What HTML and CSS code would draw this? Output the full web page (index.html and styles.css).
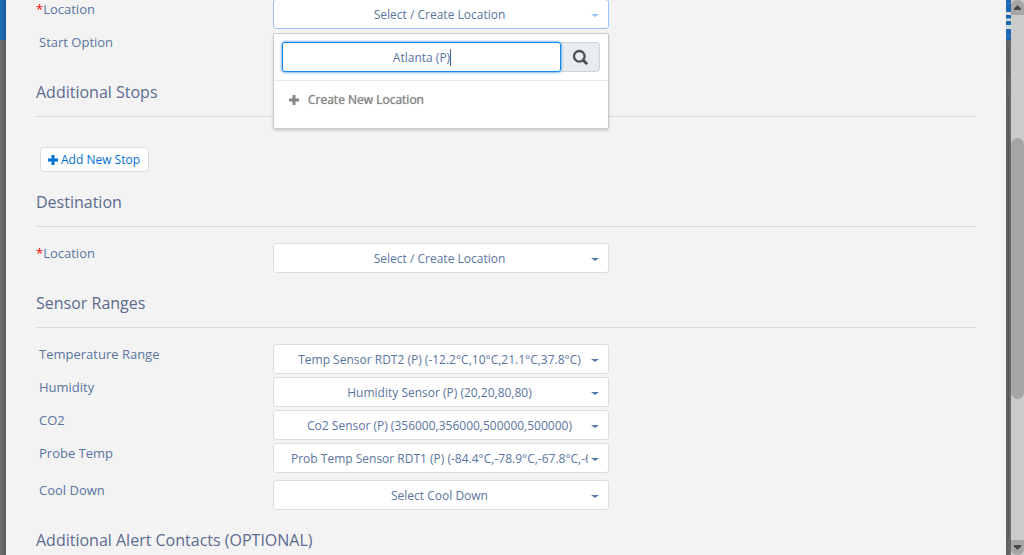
FILE: index.html
```html
<!DOCTYPE html>
<html lang="en">
<head>
<meta charset="utf-8">
<title>New Shipment</title>
<link rel="stylesheet" href="styles.css">
</head>
<body>
<div class="backdrop-left"></div>
<main class="panel">
  <section>
    <div class="row row-first">
      <label class="label" for="origin"><span class="required">*</span>Location</label>
      <div class="picker picker-open">
        <select class="select" id="origin"><option>Select / Create Location</option></select>
        <div class="menu">
          <div class="search">
            <div class="search-field">
              <input class="search-input" type="text" value="Atlanta (P)" aria-label="Search locations">
              <span class="cursor"></span>
            </div>
            <button class="search-button" type="button" aria-label="Search">
              <svg width="16" height="16" viewBox="0 0 16 16" fill="none" stroke="currentColor"><circle cx="7.300" cy="7.300" r="5.300" stroke-width="2.300"/><path d="M11.200 11.200L14.300 14.300" stroke-width="2.900" stroke-linecap="round"/></svg>
            </button>
          </div>
          <button class="create" type="button">
            <svg class="plus" width="10" height="10" viewBox="0 0 10 10"><path d="M3.5 0h3v3.500H10v3H6.500V10h-3V6.500H0v-3h3.500z" fill="currentColor"/></svg>
            Create New Location
          </button>
        </div>
      </div>
    </div>
    <div class="row"><span class="label label-plain">Start Option</span></div>
  </section>

  <section>
    <h2 class="heading">Additional Stops</h2>
    <button class="add" type="button"><svg class="plus" width="10" height="10" viewBox="0 0 10 10"><path d="M3.5 0h3v3.500H10v3H6.500V10h-3V6.500H0v-3h3.500z" fill="currentColor"/></svg>Add New Stop</button>
  </section>

  <section>
    <h2 class="heading">Destination</h2>
    <div class="row">
      <label class="label" for="destination"><span class="required">*</span>Location</label>
      <div class="picker"><select class="select" id="destination"><option>Select / Create Location</option></select></div>
    </div>
  </section>

  <section>
    <h2 class="heading">Sensor Ranges</h2>
    <div class="row">
      <label class="label label-plain" for="temperature">Temperature Range</label>
      <div class="picker"><select class="select" id="temperature"><option>Temp Sensor RDT2 (P) (-12.2°C,10°C,21.1°C,37.8°C)</option></select></div>
    </div>
    <div class="row">
      <label class="label label-plain" for="humidity">Humidity</label>
      <div class="picker"><select class="select" id="humidity"><option>Humidity Sensor (P) (20,20,80,80)</option></select></div>
    </div>
    <div class="row">
      <label class="label label-plain" for="co2">CO2</label>
      <div class="picker"><select class="select" id="co2"><option>Co2 Sensor (P) (356000,356000,500000,500000)</option></select></div>
    </div>
    <div class="row">
      <label class="label label-plain" for="probe">Probe Temp</label>
      <div class="picker"><select class="select" id="probe"><option>Prob Temp Sensor RDT1 (P) (-84.4°C,-78.9°C,-67.8°C,-62.2°C)</option></select></div>
    </div>
    <div class="row row-spaced">
      <label class="label label-plain" for="cooldown">Cool Down</label>
      <div class="picker"><select class="select" id="cooldown"><option>Select Cool Down</option></select></div>
    </div>
  </section>

  <section>
    <h2 class="heading">Additional Alert Contacts (OPTIONAL)</h2>
  </section>
</main>
<div class="backdrop-right">
  <div class="nav-edge"><svg width="5" height="40" viewBox="0 0 5 40"><path d="M0 12h5v3H0zM0 18.500h5v2.500H0zM0 25h5v4H0z" fill="#d2d8dc"/><path d="M0 3.500h5M0 36.500h5" stroke="#3a7cba"/></svg></div>
  <div class="card-edge card-edge-small"></div>
  <div class="card-edge card-edge-tall"></div>
</div>
<div class="scrollbar">
  <div class="arrow arrow-up"><svg width="7" height="5" viewBox="0 0 7 5"><path d="M3.500 0L7 3.500V5H0V3.500z" fill="#484848"/></svg></div>
  <div class="track"><div class="thumb"></div></div>
  <div class="arrow arrow-down"><svg width="7" height="5" viewBox="0 0 7 5"><path d="M3.500 5L7 1.500V0H0v1.500z" fill="#484848"/></svg></div>
</div>
</body>
</html>
```
FILE: styles.css
```css
* { box-sizing: border-box; }

body {
  margin: 0;
  height: 100vh;
  display: grid;
  grid-template-columns: 6px minmax(0, 1fr) 5px 13px;
  overflow: hidden;
  font-family: "Open Sans", "Noto Sans", sans-serif;
  font-size: 13px;
  color: #5a75a0;
  background: #6c6c6c;
}

button, input, select { font: inherit; color: inherit; }

.backdrop-left {
  background:
    linear-gradient(90deg, transparent, rgba(0, 0, 0, .2)),
    linear-gradient(#1d6fbb 40px, #707070 40px);
}

.panel {
  height: 100vh;
  overflow: hidden;
  padding: 0 30px;
  background: #f3f3f3;
}

.row {
  display: grid;
  grid-template-columns: 237px minmax(0, 336px);
  align-items: start;
  min-height: 33px;
}
.row-first { margin-top: -1px; }
.row-spaced { margin-top: 4px; }

.label { line-height: 20px; }
.label-plain { padding-left: 3px; }
.required { color: #f00; }

.heading {
  margin: 15px 0 16px;
  padding-bottom: 12px;
  border-bottom: 1px solid #d8dadc;
  font-size: 16px;
  font-weight: 400;
  line-height: 24px;
  color: #5c6b8f;
}

.picker { position: relative; }
.picker::after {
  content: "";
  position: absolute;
  top: 15px;
  right: 10px;
  border: 4px solid transparent;
  border-top: 3px solid #5578ac;
  border-bottom: 0;
  pointer-events: none;
}
.picker-open::after { border-top-color: #99c2ff; }

.select {
  display: block;
  width: 100%;
  height: 30px;
  padding: 0 20px 0 17px;
  appearance: none;
  border: 1px solid #d8dde6;
  border-radius: 3px;
  background: #fff;
  font-size: 12px;
  text-align-last: center;
}
.picker-open .select { border-color: #99c2ff; }

.menu {
  position: absolute;
  z-index: 1;
  top: 34px;
  left: 0;
  right: 0;
  padding-bottom: 13px;
  border: 1px solid #c9c9cb;
  border-radius: 2px;
  background: #fff;
  box-shadow: 0 2px 3px rgba(0, 0, 0, .14);
}
.search {
  display: flex;
  padding: 8px;
  border-bottom: 1px solid #e5e9ee;
}
.search-field { position: relative; flex: 1; }
.search-input {
  display: block;
  width: 100%;
  height: 30px;
  border: 1px solid #1589ee;
  border-radius: 3px;
  outline: 0;
  background: #fff;
  box-shadow: 0 0 3px #0070d2;
  font-size: 12px;
  text-align: center;
}
.cursor {
  position: absolute;
  top: 7px;
  left: calc(50% + 28px);
  width: 1px;
  height: 17px;
  background: #48648f;
}
.search-button {
  display: grid;
  place-items: center;
  width: 39px;
  height: 30px;
  padding: 0;
  border: 1px solid #d0d3d8;
  border-left: 0;
  border-radius: 0 4px 4px 0;
  background: #e9ecef;
  color: #495057;
}
.create {
  display: flex;
  align-items: center;
  gap: 9px;
  width: 100%;
  height: 34px;
  padding: 3px 15px 0;
  border: 0;
  background: none;
  color: #888;
  font-size: 12px;
  text-shadow: 0 0 1px #888;
}

.add {
  display: flex;
  align-items: center;
  gap: 3px;
  height: 25px;
  margin: 30px 0 18px 4px;
  padding: 0 8px 0 7px;
  border: 1px solid #d8dde6;
  border-radius: 4px;
  background: #fff;
  color: #0070d2;
  font-size: 12px;
}

.backdrop-right {
  overflow: hidden;
  background: linear-gradient(90deg, #5e5e5e, #6c6c6c);
}
.nav-edge { height: 40px; background: #1b68b0; }
.nav-edge svg { display: block; }
.card-edge {
  width: 3px;
  margin-top: 8px;
  border: 1px solid #575757;
  border-left: 0;
  border-radius: 0 3px 3px 0;
}
.card-edge-small { height: 30px; }
.card-edge-tall { height: 444px; margin-top: 17px; }

.scrollbar {
  display: flex;
  flex-direction: column;
  height: 100vh;
  background: #cbcbcb;
}
.arrow {
  display: grid;
  place-items: center;
  height: 15px;
  background: #a6a6a6;
}
.arrow-up { border-radius: 6px 6px 0 0; }
.arrow-down { border-radius: 0 0 6px 6px; }
.track { flex: 1; padding-top: 123px; }
.thumb { height: 261px; border-radius: 7px; background: #a6a6a6; }
```
